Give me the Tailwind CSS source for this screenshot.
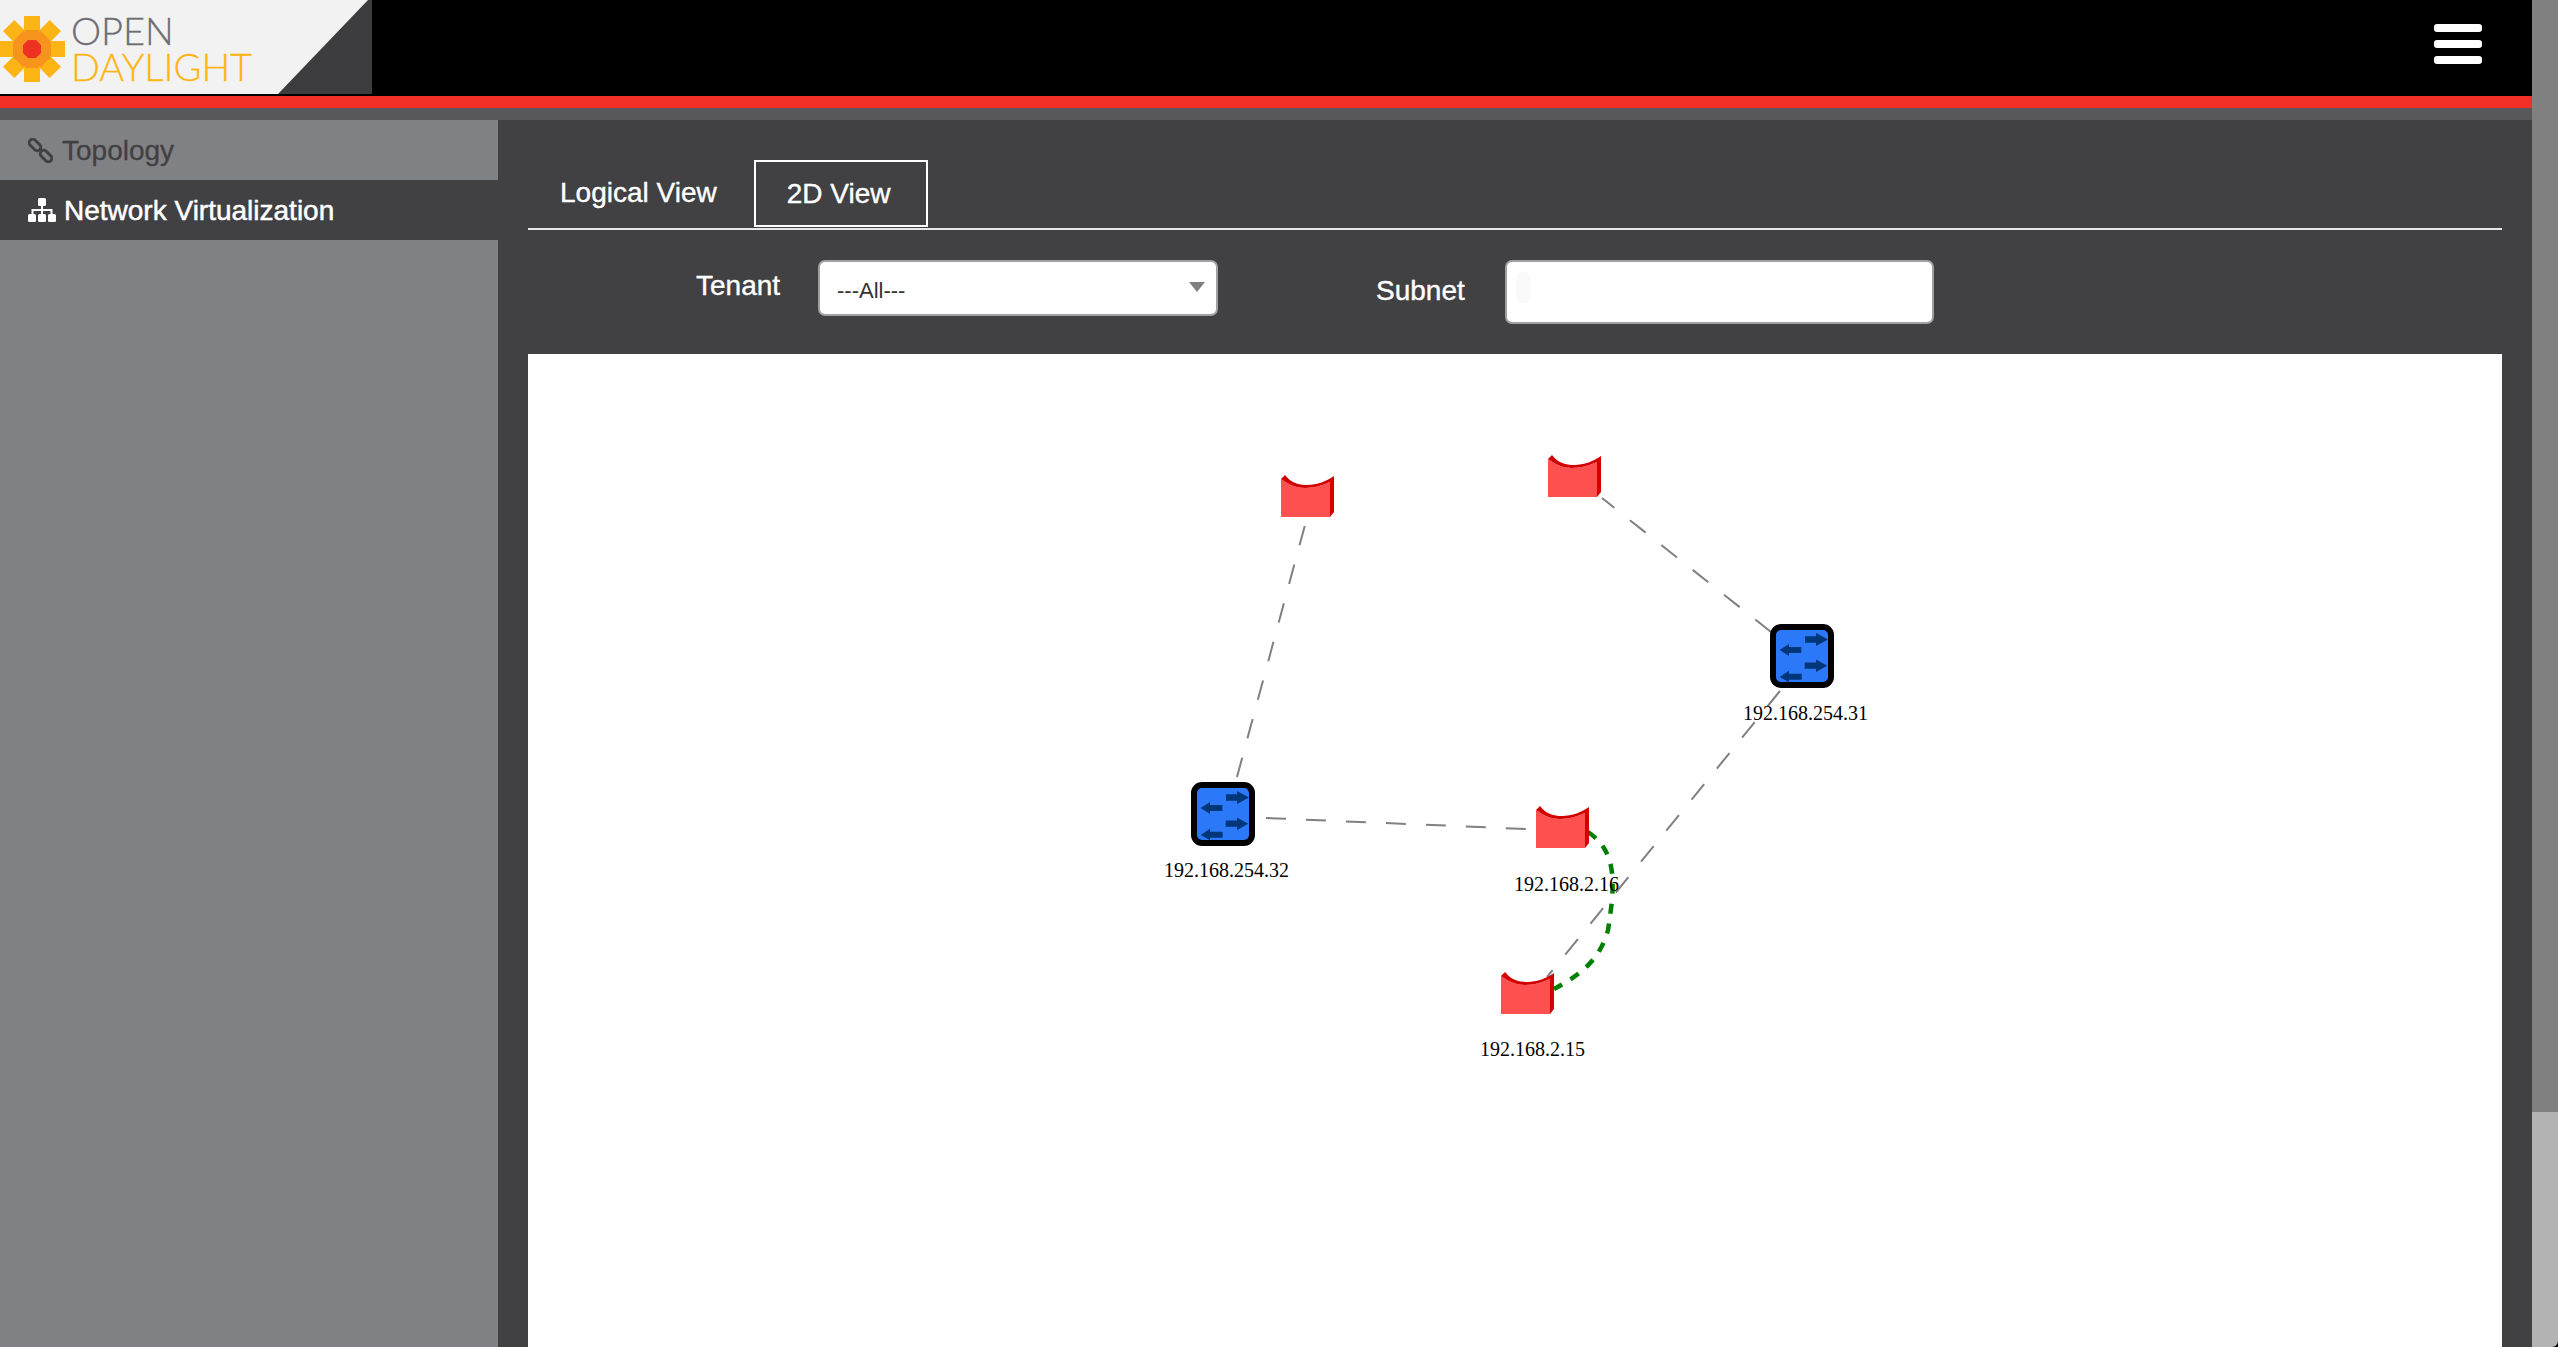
<!DOCTYPE html>
<html lang="en">
<head>
    <meta charset="UTF-8">
    <title>OpenDaylight</title>
    <script src="https://cdn.jsdelivr.net/npm/@tailwindcss/browser@4"></script>
</head>
<body class="h-screen overflow-hidden flex bg-black font-['Liberation_Sans',sans-serif]">
    <div class="w-[2532px] h-full flex flex-col">
        <!-- header -->
        <header class="h-[96px] bg-black shrink-0">
            <div class="relative w-[372px] h-[94px] bg-[#f2f2f2] overflow-hidden">
                <svg class="absolute left-0 top-0" width="372" height="94" viewBox="0 0 372 94">
                    <polygon points="278,94 368,0 372,0 372,94" fill="#3d3d3f"/>
                    <g transform="translate(32 49)">
                        <g fill="#fdb515">
                            <rect x="-8" y="-33" width="16" height="66"/>
                            <rect x="-33" y="-8" width="66" height="16"/>
                            <rect x="-8" y="-33" width="16" height="66" transform="rotate(45)"/>
                            <rect x="-8" y="-33" width="16" height="66" transform="rotate(-45)"/>
                        </g>
                        <g fill="#f7941d">
                            <rect x="-7" y="-19" width="14" height="38"/>
                            <rect x="-19" y="-7" width="38" height="14"/>
                            <rect x="-7" y="-19" width="14" height="38" transform="rotate(45)"/>
                            <rect x="-7" y="-19" width="14" height="38" transform="rotate(-45)"/>
                        </g>
                        <polygon points="-4,-9 4,-9 9,-4 9,4 4,9 -4,9 -9,4 -9,-4" fill="#ef3124"/>
                    </g>
                </svg>
                <div class="absolute left-[71px] top-[13px] text-[38px] leading-[35px] font-light font-['Lato',sans-serif] text-[#6d6e71] [-webkit-text-stroke:0.3px_#6d6e71]">OPEN</div>
                <div class="absolute left-[71px] top-[49px] text-[38px] leading-[35px] font-light font-['Lato',sans-serif] text-[#fdb515] [-webkit-text-stroke:0.3px_#fdb515]">DAYLIGHT</div>
            </div>
            <div class="absolute left-[2434px] top-[24px] w-[48px] flex flex-col gap-[8px]">
                <span class="h-[8px] rounded-[3px] bg-white"></span>
                <span class="h-[8px] rounded-[3px] bg-white"></span>
                <span class="h-[8px] rounded-[3px] bg-white"></span>
            </div>
        </header>
        <div class="h-[12px] bg-[#f12f26] shrink-0"></div>
        <div class="h-[12px] bg-[#58585a] shrink-0"></div>

        <div class="flex flex-1 min-h-0">
            <!-- sidebar -->
            <aside class="w-[498px] bg-[#808184] text-[28px]">
                <div class="h-[60px] flex items-center pl-[28px] gap-[9px] text-[#414042] [-webkit-text-stroke:0.3px_#414042]">
                    <svg width="25" height="25" viewBox="0 0 25 25" fill="none" stroke="#414042" stroke-width="3">
                        <rect x="0.300" y="3.500" width="13.400" height="7" rx="3.500" transform="rotate(45 7 7)"/>
                        <rect x="11.300" y="14.500" width="13.400" height="7" rx="3.500" transform="rotate(45 18 18)"/>
                    </svg>
                    <span class="mt-px">Topology</span>
                </div>
                <div class="h-[60px] flex items-center pl-[28px] gap-[8px] bg-[#414042] text-white [-webkit-text-stroke:0.5px_#fff]">
                    <svg width="28" height="24" viewBox="0 0 28 24" fill="#fff">
                        <rect x="10" y="0" width="8" height="8" rx="1.500"/>
                        <rect x="0" y="16" width="8" height="8" rx="1.500"/>
                        <rect x="10" y="16" width="8" height="8" rx="1.500"/>
                        <rect x="20" y="16" width="8" height="8" rx="1.500"/>
                        <path d="M13 8h2v3h9.500v5h-2v-3H15v3h-2v-3H5.500v3h-2v-5H13z"/>
                    </svg>
                    <span class="mt-px">Network Virtualization</span>
                </div>
            </aside>

            <!-- main -->
            <main class="flex-1 bg-[#414042] px-[30px] pt-[40px] flex flex-col min-w-0">
                <div class="h-[70px] border-b-2 border-[#e6e6e6] flex items-start text-[28px] text-white shrink-0 [-webkit-text-stroke:0.4px_#fff]">
                    <div class="ml-[32px] mr-[37px] mt-[15px] leading-[36px]">Logical View</div>
                    <div class="w-[174px] h-[67px] border-2 border-white flex items-center pl-[31px]">2D View</div>
                </div>
                <div class="h-[124px] flex items-start text-white shrink-0">
                    <div class="ml-[168px] mt-[38px] text-[28px] leading-[36px] w-[122px] [-webkit-text-stroke:0.4px_#fff]">Tenant</div>
                    <div class="mt-[30px] w-[400px] h-[56px] bg-white rounded-[7px] border-2 border-[#a0a0a0] flex items-center justify-between pl-[17px] pr-[11px]">
                        <span class="text-[22px] text-[#333] mt-[4px]">---All---</span>
                        <span class="w-0 h-0 border-x-[8px] border-t-[10px] border-x-transparent border-t-[#808080] -mt-[2px]"></span>
                    </div>
                    <div class="ml-[158px] mt-[43px] text-[28px] leading-[36px] w-[129px] [-webkit-text-stroke:0.4px_#fff]">Subnet</div>
                    <div class="relative mt-[30px] w-[429px] h-[64px] bg-white rounded-[7px] border-2 border-[#a0a0a0]">
                        <div class="absolute left-[9px] top-[10px] w-[14px] h-[31px] rounded-[6px] bg-[#fafafa]"></div>
                    </div>
                </div>
                <!-- topology canvas -->
                <div class="flex-1 bg-white min-h-0">
                    <svg class="block" width="1974" height="993" viewBox="528 354 1974 993">
                        <defs>
                            <g id="host">
                                <path d="M0 4C8 10 16 13 24 13C33 13 42 10 49 7V42H0Z" fill="#ff5050"/>
                                <path d="M4 0C10 8 18 10 26 10C36 10 46 6 53 1V37L49 42V7C42 10 33 13 24 13C16 13 8 10 0 4Z" fill="#d40000"/>
                            </g>
                            <g id="switch">
                                <rect x="3" y="3" width="58" height="58" rx="8" fill="#2b78f8" stroke="#000" stroke-width="6"/>
                                <g fill="#00367a">
                                    <polygon points="35,12.300 46,12.300 46,9 58,15.500 46,22 46,18.700 35,18.700"/>
                                    <polygon points="31.300,23 19,23 19,20 9.700,26 19,32 19,29 31.300,29"/>
                                    <polygon points="34.700,38.500 46,38.500 46,35.500 57.300,41.700 46,48 46,44.700 34.700,44.700"/>
                                    <polygon points="31.700,49.800 19,49.800 19,46.700 9.700,53 19,58.300 19,55.800 31.700,55.800"/>
                                </g>
                            </g>
                        </defs>
                        <g fill="none" stroke="#808080" stroke-width="2" stroke-dasharray="20 20">
                            <line x1="1237" y1="777" x2="1305" y2="525"/>
                            <line x1="1266" y1="818" x2="1526" y2="829"/>
                            <line x1="1771" y1="632" x2="1602" y2="498"/>
                            <line x1="1780" y1="691" x2="1547" y2="977"/>
                        </g>
                        <path d="M1588 832C1618 852 1615 885 1608 930C1600 960 1580 975 1554 989" fill="none" stroke="#008000" stroke-width="4.500" stroke-dasharray="10 10"/>
                        <use href="#host" x="1281" y="475"/>
                        <use href="#host" x="1548" y="455"/>
                        <use href="#host" x="1536" y="806"/>
                        <use href="#host" x="1501" y="972"/>
                        <use href="#switch" x="1191" y="782"/>
                        <use href="#switch" x="1770" y="624"/>
                        <g font-family="'Liberation Serif', serif" font-size="20" fill="#000">
                            <text x="1164" y="877">192.168.254.32</text>
                            <text x="1743" y="720">192.168.254.31</text>
                            <text x="1514" y="891">192.168.2.16</text>
                            <text x="1480" y="1056">192.168.2.15</text>
                        </g>
                    </svg>
                </div>
            </main>
        </div>
    </div>
    <!-- page scrollbar -->
    <div class="w-[26px] h-full flex flex-col bg-black shrink-0">
        <div class="h-[1112px] bg-[#808080]"></div>
        <div class="flex-1 bg-[#b3b3b3] rounded-br-[6px]"></div>
    </div>
</body>
</html>
